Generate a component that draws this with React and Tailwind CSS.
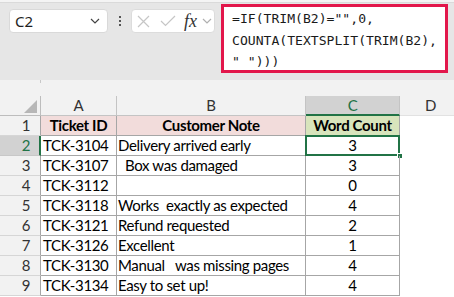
import React from 'react';

const rows = [
  { n: 2, id: 'TCK-3104', note: 'Delivery arrived early', count: 3 },
  { n: 3, id: 'TCK-3107', note: '  Box was damaged', count: 3 },
  { n: 4, id: 'TCK-3112', note: '', count: 0 },
  { n: 5, id: 'TCK-3118', note: 'Works  exactly as expected', count: 4 },
  { n: 6, id: 'TCK-3121', note: 'Refund requested', count: 2 },
  { n: 7, id: 'TCK-3126', note: 'Excellent', count: 1 },
  { n: 8, id: 'TCK-3130', note: 'Manual   was missing pages', count: 4 },
  { n: 9, id: 'TCK-3134', note: 'Easy to set up!', count: 4 },
];

const Chevron = ({ className }) => (
  <svg width="10" height="6" viewBox="0 0 10 6" className={className}>
    <path d="M1 1 L5 5 L9 1" fill="none" stroke="currentColor" strokeWidth="1.2" />
  </svg>
);

const FormulaBar = () => (
  <div className="flex items-start h-[80px] bg-[#e6e6e6]">
    {/* name box */}
    <div className="ml-[9px] mt-[9px] w-[99px] h-[24px] bg-white border border-[#d9d9d9] rounded-[4px] flex items-center justify-between pl-[5px] pr-[7px]">
      <span className="text-[15px] text-[#1f1f1f] font-['Noto_Sans',sans-serif] leading-none">C2</span>
      <Chevron className="text-[#444]" />
    </div>
    {/* dots */}
    <div className="w-[23px] mt-[16px] flex flex-col items-center gap-[2px]">
      <div className="w-[2px] h-[2px] bg-[#555]" />
      <div className="w-[2px] h-[2px] bg-[#555]" />
      <div className="w-[2px] h-[2px] bg-[#555]" />
    </div>
    {/* cancel / enter / fx */}
    <div className="mt-[9px] w-[84px] h-[24px] bg-white border border-[#dcdcdc] rounded-[4px] flex items-center pl-[5px]">
      <svg width="13" height="13" viewBox="0 0 13 13" className="text-[#c6c6c6]">
        <path d="M1 1 L12 12 M12 1 L1 12" stroke="currentColor" strokeWidth="1.2" />
      </svg>
      <svg width="16" height="12" viewBox="0 0 16 12" className="ml-[10px] text-[#c6c6c6]">
        <path d="M1 6 L5.5 10.5 L15 1" fill="none" stroke="currentColor" strokeWidth="1.2" />
      </svg>
      <span className="ml-[8px] font-['Liberation_Serif',serif] italic text-[18px] leading-none text-[#333]">fx</span>
      <Chevron className="ml-[5px] text-[#b0b0b0]" />
    </div>
    {/* formula */}
    <div className="ml-[6px] mt-[4px] w-[227px] h-[69px] bg-white border-[3px] border-[#e2174b] pl-[8px] pt-[1px]">
      <div className="font-['DejaVu_Sans_Mono',monospace] text-[13.1px] leading-[21.5px] text-[#1a1a1a] whitespace-pre">
        <div>=IF(TRIM(B2)="",0,</div>
        <div>COUNTA(TEXTSPLIT(TRIM(B2),</div>
        <div>" ")))</div>
      </div>
    </div>
  </div>
);

const cellFont = "font-['Lato',sans-serif] text-[15px] tracking-[-0.35px] text-black";

export default function App() {
  return (
    <div className="w-[454px] h-[297px] overflow-hidden bg-white relative">
      <div className="absolute top-0 left-0 w-full h-[3px] bg-[#f4f4f4] border-b border-[#dadada] z-10" />
      <FormulaBar />
      <div className="h-[16px] bg-[#f2f2f2] relative">
        <div className="absolute left-[40px] top-0 w-px h-[3px] bg-[#c8c8c8]" />
      </div>
      <div className={`grid grid-cols-[41px_76px_189px_94px_1fr] auto-rows-[20px] ${cellFont}`}>
        {/* column headers */}
        <div className="bg-[#f2f2f2] border-r border-b border-[#bdbdbd] relative">
          <svg width="13" height="13" viewBox="0 0 13 13" className="absolute right-[3px] bottom-[2px]">
            <path d="M13 0 L13 13 L0 13 Z" fill="#b7b7b7" />
          </svg>
        </div>
        <div className="bg-[#f2f2f2] border-r border-b border-[#c4c4c4] flex items-center justify-center text-[#333]">A</div>
        <div className="bg-[#f2f2f2] border-r border-b border-[#c4c4c4] flex items-center justify-center text-[#333]">B</div>
        <div className="bg-[#d2d2d2] border-r border-[#c4c4c4] border-b-2 border-b-[#217346] flex items-center justify-center text-[#217346]">C</div>
        <div className="bg-[#f2f2f2] border-b border-[#e2e2e2] flex items-center pl-[25px] text-[#333]">D</div>

        {/* row 1 */}
        <div className="bg-[#f2f2f2] border-r border-r-[#a6a6a6] border-b border-b-[#d6d6d6] flex items-center justify-end pr-[10px] text-[#333]">1</div>
        <div className="bg-[#f2dcdb] border-r border-b border-[#a6a6a6] flex items-center justify-center font-bold">Ticket ID</div>
        <div className="bg-[#f2dcdb] border-r border-b border-[#a6a6a6] flex items-center justify-center font-bold">Customer Note</div>
        <div className="bg-[#d8e4bc] border-r border-b border-[#a6a6a6] flex items-center justify-center font-bold">Word Count</div>
        <div />

        {rows.map((r) => {
          const sel = r.n === 2;
          return (
            <React.Fragment key={r.n}>
              <div
                className={
                  sel
                    ? 'bg-[#d2d2d2] border-r-2 border-r-[#217346] border-b border-b-[#c8c8c8] flex items-center justify-end pr-[9px] text-[#217346]'
                    : 'bg-[#f2f2f2] border-r border-r-[#a6a6a6] border-b border-b-[#d6d6d6] flex items-center justify-end pr-[10px] text-[#333]'
                }
              >
                {r.n}
              </div>
              <div className="border-r border-b border-[#a6a6a6] flex items-center pl-[2px] whitespace-pre">{r.id}</div>
              <div className="border-r border-b border-[#a6a6a6] flex items-center pl-[1px] whitespace-pre">{r.note}</div>
              <div className="border-r border-b border-[#a6a6a6] flex items-center justify-center relative">
                {sel && (
                  <>
                    <div className="absolute -left-px -top-px w-[calc(100%+2px)] h-[calc(100%+2px)] border-2 border-[#217346]" />
                    <div className="absolute -right-[4px] -bottom-[4px] w-[6px] h-[6px] bg-[#217346] border border-white" />
                  </>
                )}
                {r.count}
              </div>
              <div />
            </React.Fragment>
          );
        })}
      </div>
    </div>
  );
}
